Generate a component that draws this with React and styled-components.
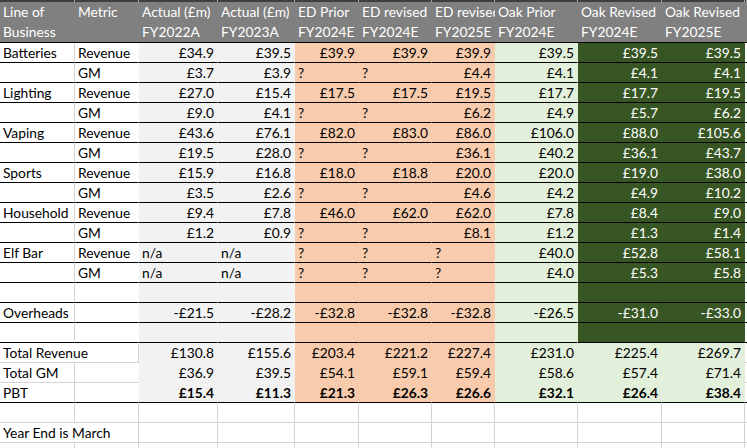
import React from 'react';
import styled, { createGlobalStyle } from 'styled-components';

// spreadsheet column widths, measured off the grid lines
const COLS = '75px 64px 79px 77px 64px 73px 63px 83px 84px 83px 1fr';

const FILLS = {
  none: '#ffffff',
  gray: '#f2f2f2',
  orange: '#f8cbad',
  light: '#e2efda',
  dark: '#375623',
};
const GRIDLINE = '#d4d4d4';

const GlobalStyle = createGlobalStyle`
  body {
    margin: 0;
    background: #ffffff;
  }
`;

const Sheet = styled.div`
  width: 747px;
  height: 448px;
  overflow: hidden;
  font-family: Lato, "Open Sans", sans-serif;
  font-size: 13.8px;
  color: #000;
`;

const HeaderRow = styled.div`
  display: grid;
  grid-template-columns: ${COLS};
  height: 43px;
  box-sizing: border-box;
  border-bottom: 1px solid #000;
  background: #808080;
`;

const HeadCell = styled.div`
  display: flex;
  flex-direction: column;
  overflow: hidden;
`;

const Strip = styled.div`
  height: 2px;
  box-sizing: border-box;
  background: #3f3f3f;
  border-right: 1px solid #a6a6a6;
`;

const HeadText = styled.div`
  padding-left: 3px;
  line-height: 20px;
  white-space: pre;
  color: #ffffff;
`;

const Row = styled.div`
  display: grid;
  grid-template-columns: ${COLS};
  height: 20px;
`;

const Cell = styled.div`
  box-sizing: border-box;
  height: 20px;
  overflow: hidden;
  white-space: nowrap;
  grid-column: span ${p => p.$span || 1};
  padding: 0 3px;
  line-height: 19px;
  background: ${p => FILLS[p.$fill]};
  color: ${p => (p.$fill === 'dark' ? '#ffffff' : '#000000')};
  font-weight: ${p => (p.$bold ? 700 : 400)};
  text-align: ${p => (p.$right ? 'right' : 'left')};
  border-bottom: 1px solid ${p => (p.$rule ? '#000' : p.$fill === 'none' ? GRIDLINE : FILLS[p.$fill])};
  border-right: 1px solid ${p => (p.$vline ? GRIDLINE : FILLS[p.$fill])};
`;

const HEADERS = [
  'Line of\nBusiness',
  'Metric',
  'Actual (£m)\nFY2022A',
  'Actual (£m)\nFY2023A',
  'ED Prior\nFY2024E',
  'ED revised\nFY2024E',
  'ED revised\nFY2025E',
  'Oak Prior\nFY2024E',
  'Oak Revised\nFY2024E',
  'Oak Revised\nFY2025E',
  '',
];

const BODY = [
  { lob: 'Batteries', metric: 'Revenue', v: ['£34.9', '£39.5', '£39.9', '£39.9', '£39.9', '£39.5', '£39.5', '£39.5'] },
  { lob: '', metric: 'GM', v: ['£3.7', '£3.9', '?', '?', '£4.4', '£4.1', '£4.1', '£4.1'] },
  { lob: 'Lighting', metric: 'Revenue', v: ['£27.0', '£15.4', '£17.5', '£17.5', '£19.5', '£17.7', '£17.7', '£19.5'] },
  { lob: '', metric: 'GM', v: ['£9.0', '£4.1', '?', '?', '£6.2', '£4.9', '£5.7', '£6.2'] },
  { lob: 'Vaping', metric: 'Revenue', v: ['£43.6', '£76.1', '£82.0', '£83.0', '£86.0', '£106.0', '£88.0', '£105.6'] },
  { lob: '', metric: 'GM', v: ['£19.5', '£28.0', '?', '?', '£36.1', '£40.2', '£36.1', '£43.7'] },
  { lob: 'Sports', metric: 'Revenue', v: ['£15.9', '£16.8', '£18.0', '£18.8', '£20.0', '£20.0', '£19.0', '£38.0'] },
  { lob: '', metric: 'GM', v: ['£3.5', '£2.6', '?', '?', '£4.6', '£4.2', '£4.9', '£10.2'] },
  { lob: 'Household', metric: 'Revenue', v: ['£9.4', '£7.8', '£46.0', '£62.0', '£62.0', '£7.8', '£8.4', '£9.0'] },
  { lob: '', metric: 'GM', v: ['£1.2', '£0.9', '?', '?', '£8.1', '£1.2', '£1.3', '£1.4'] },
  { lob: 'Elf Bar', metric: 'Revenue', v: ['n/a', 'n/a', '?', '?', '?', '£40.0', '£52.8', '£58.1'] },
  { lob: '', metric: 'GM', v: ['n/a', 'n/a', '?', '?', '?', '£4.0', '£5.3', '£5.8'] },
  { lob: '', metric: '', v: ['', '', '', '', '', '', '', ''] },
  { lob: 'Overheads', metric: '', v: ['-£21.5', '-£28.2', '-£32.8', '-£32.8', '-£32.8', '-£26.5', '-£31.0', '-£33.0'] },
  { lob: '', metric: '', v: ['', '', '', '', '', '', '', ''] },
];

const TOTALS = [
  { lob: 'Total Revenue', span: 2, v: ['£130.8', '£155.6', '£203.4', '£221.2', '£227.4', '£231.0', '£225.4', '£269.7'] },
  { lob: 'Total GM', v: ['£36.9', '£39.5', '£54.1', '£59.1', '£59.4', '£58.6', '£57.4', '£71.4'] },
  { lob: 'PBT', bold: true, rule: true, v: ['£15.4', '£11.3', '£21.3', '£26.3', '£26.6', '£32.1', '£26.4', '£38.4'] },
];

const BODY_FILLS = ['gray', 'gray', 'orange', 'orange', 'orange', 'light', 'dark', 'dark'];
const TOTAL_FILLS = ['gray', 'gray', 'orange', 'orange', 'orange', 'light', 'light', 'light'];

const isNumber = s => s.startsWith('£') || s.startsWith('-');

function ValueCells({ values, fills, rule, bold }) {
  return values.map((val, i) => (
    <Cell key={i} $fill={fills[i]} $rule={rule} $bold={bold} $right={isNumber(val)}>
      {val}
    </Cell>
  ));
}

function BlankRow({ label, span }) {
  const cells = [];
  let col = 0;
  if (label) {
    cells.push(<Cell key="label" $fill="none" $vline $span={span}>{label}</Cell>);
    col = span;
  }
  for (; col < 11; col++) {
    cells.push(<Cell key={col} $fill="none" $vline />);
  }
  return <Row>{cells}</Row>;
}

export default function App() {
  return (
    <>
      <GlobalStyle />
      <Sheet>
        <HeaderRow>
          {HEADERS.map((h, i) => (
            <HeadCell key={i}>
              <Strip />
              <HeadText>{h}</HeadText>
            </HeadCell>
          ))}
        </HeaderRow>

        {BODY.map((r, i) => (
          <Row key={i}>
            <Cell $fill="none" $rule $vline>{r.lob}</Cell>
            <Cell $fill="none" $rule>{r.metric}</Cell>
            <ValueCells values={r.v} fills={BODY_FILLS} rule />
            <Cell $fill="none" $rule />
          </Row>
        ))}

        {TOTALS.map((r, i) => (
          <Row key={i}>
            <Cell $fill="none" $rule={r.rule} $vline $span={r.span}>{r.lob}</Cell>
            {!r.span && <Cell $fill="none" $rule={r.rule} />}
            <ValueCells values={r.v} fills={TOTAL_FILLS} rule={r.rule} bold={r.bold} />
            <Cell $fill="none" $rule={r.rule} $vline />
          </Row>
        ))}

        <BlankRow />
        <BlankRow label="Year End is March" span={2} />
        <BlankRow />
      </Sheet>
    </>
  );
}
